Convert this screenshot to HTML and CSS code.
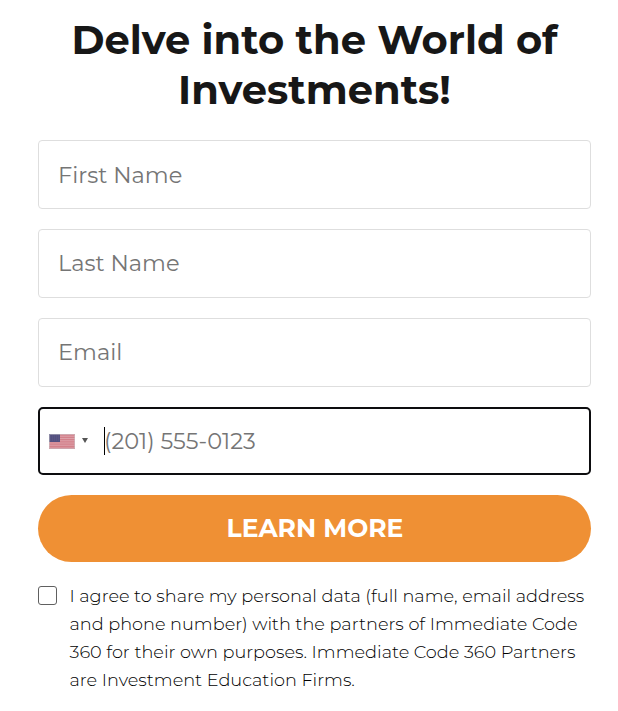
FILE: index.html
```html
<!DOCTYPE html>
<html lang="en">
<head>
    <meta charset="UTF-8">
    <meta name="viewport" content="width=device-width, initial-scale=1.0">
    <title>Delve into the World of Investments!</title>
    <link rel="stylesheet" href="styles.css">
</head>
<body>
    <form class="signup">
        <h1>Delve into the World of<br>Investments!</h1>

        <input class="field" type="text" name="first_name" placeholder="First Name">
        <input class="field" type="text" name="last_name" placeholder="Last Name">
        <input class="field" type="email" name="email" placeholder="Email">

        <div class="phone">
            <svg class="flag" width="26" height="15" viewBox="0 0 26 15">
                <rect width="26" height="15" fill="#dda0a8"/>
                <path d="M0 1h26M0 3.3h26M0 5.6h26M0 7.9h26M0 10.2h26M0 12.5h26M0 14.5h26" stroke="#d3808a" stroke-width="1.3"/>
                <rect width="11" height="8" fill="#545080"/>
                <path d="M1 2h9M1 4h9M1 6h9" stroke="#67648f" stroke-width=".6" stroke-dasharray="1 1"/>
                <rect x=".5" y=".5" width="25" height="14" fill="none" stroke="#c8c8cc" stroke-opacity=".5"/>
            </svg>
            <span class="arrow"></span>
            <span class="caret"></span>
            <input type="tel" name="phone" placeholder="(201) 555-0123">
        </div>

        <button type="button">LEARN MORE</button>

        <label class="agree">
            <input type="checkbox" name="agree">
            <span class="agree-text">
                <span class="line">I agree to share my personal data (full name, email address</span>
                <span class="line">and phone number) with the partners of Immediate Code</span>
                <span class="line">360 for their own purposes. Immediate Code 360 Partners</span>
                <span class="line">are Investment Education Firms.</span>
            </span>
        </label>
    </form>
</body>
</html>
```
FILE: styles.css
```css
* {
    margin: 0;
    padding: 0;
    box-sizing: border-box;
}

body {
    background: #fff;
    color: #171717;
    font-family: Montserrat, Inter, sans-serif;
}

.signup {
    display: flex;
    flex-direction: column;
    width: 553px;
    margin-left: 38px;
    padding-top: 15px;
}

h1 {
    font-size: 40px;
    font-weight: 700;
    line-height: 50px;
    text-align: center;
    white-space: nowrap;
    margin-bottom: 25px;
}

/* Form fields */
.field {
    height: 69px;
    margin-bottom: 20px;
    padding: 0 19px;
    border: 1px solid #dedede;
    border-radius: 4px;
    background: #fff;
    outline: none;
}

.field + .field {
    padding-bottom: 2px;
}

.field,
.phone input {
    font-family: inherit;
    font-size: 22.5px;
    font-weight: 380;
    color: #171717;
}

input::placeholder {
    color: #757575;
    opacity: 1;
}

.phone {
    display: flex;
    align-items: center;
    height: 68px;
    margin-bottom: 20px;
    padding-left: 9px;
    border: 2px solid #0d0d0f;
    border-radius: 5px;
}

.phone input {
    flex: 1;
    min-width: 0;
    height: 60px;
    margin-left: -1px;
    border: 0;
    outline: none;
    background: none;
}

.arrow {
    margin: 0 16px 2px 7px;
    border-left: 3px solid transparent;
    border-right: 3px solid transparent;
    border-top: 5px solid #555;
}

.caret {
    width: 1px;
    height: 28px;
    background: #000;
}

button {
    height: 67px;
    border: 0;
    border-radius: 34px;
    background: #ef9034;
    color: #fff;
    font-family: inherit;
    font-size: 25px;
    font-weight: 700;
    padding: 0 0 1px 1px;
}

/* Consent */
.agree {
    display: flex;
    margin-top: 20px;
}

.agree input {
    appearance: none;
    flex: none;
    width: 19px;
    height: 19px;
    margin: 4px 12.5px 0 0;
    border: 1.5px solid #606060;
    border-radius: 3px;
}

.agree-text {
    font-size: 17.72px;
    font-weight: 350;
    line-height: 28px;
    color: #000;
}

.line {
    display: block;
    white-space: nowrap;
}
```
